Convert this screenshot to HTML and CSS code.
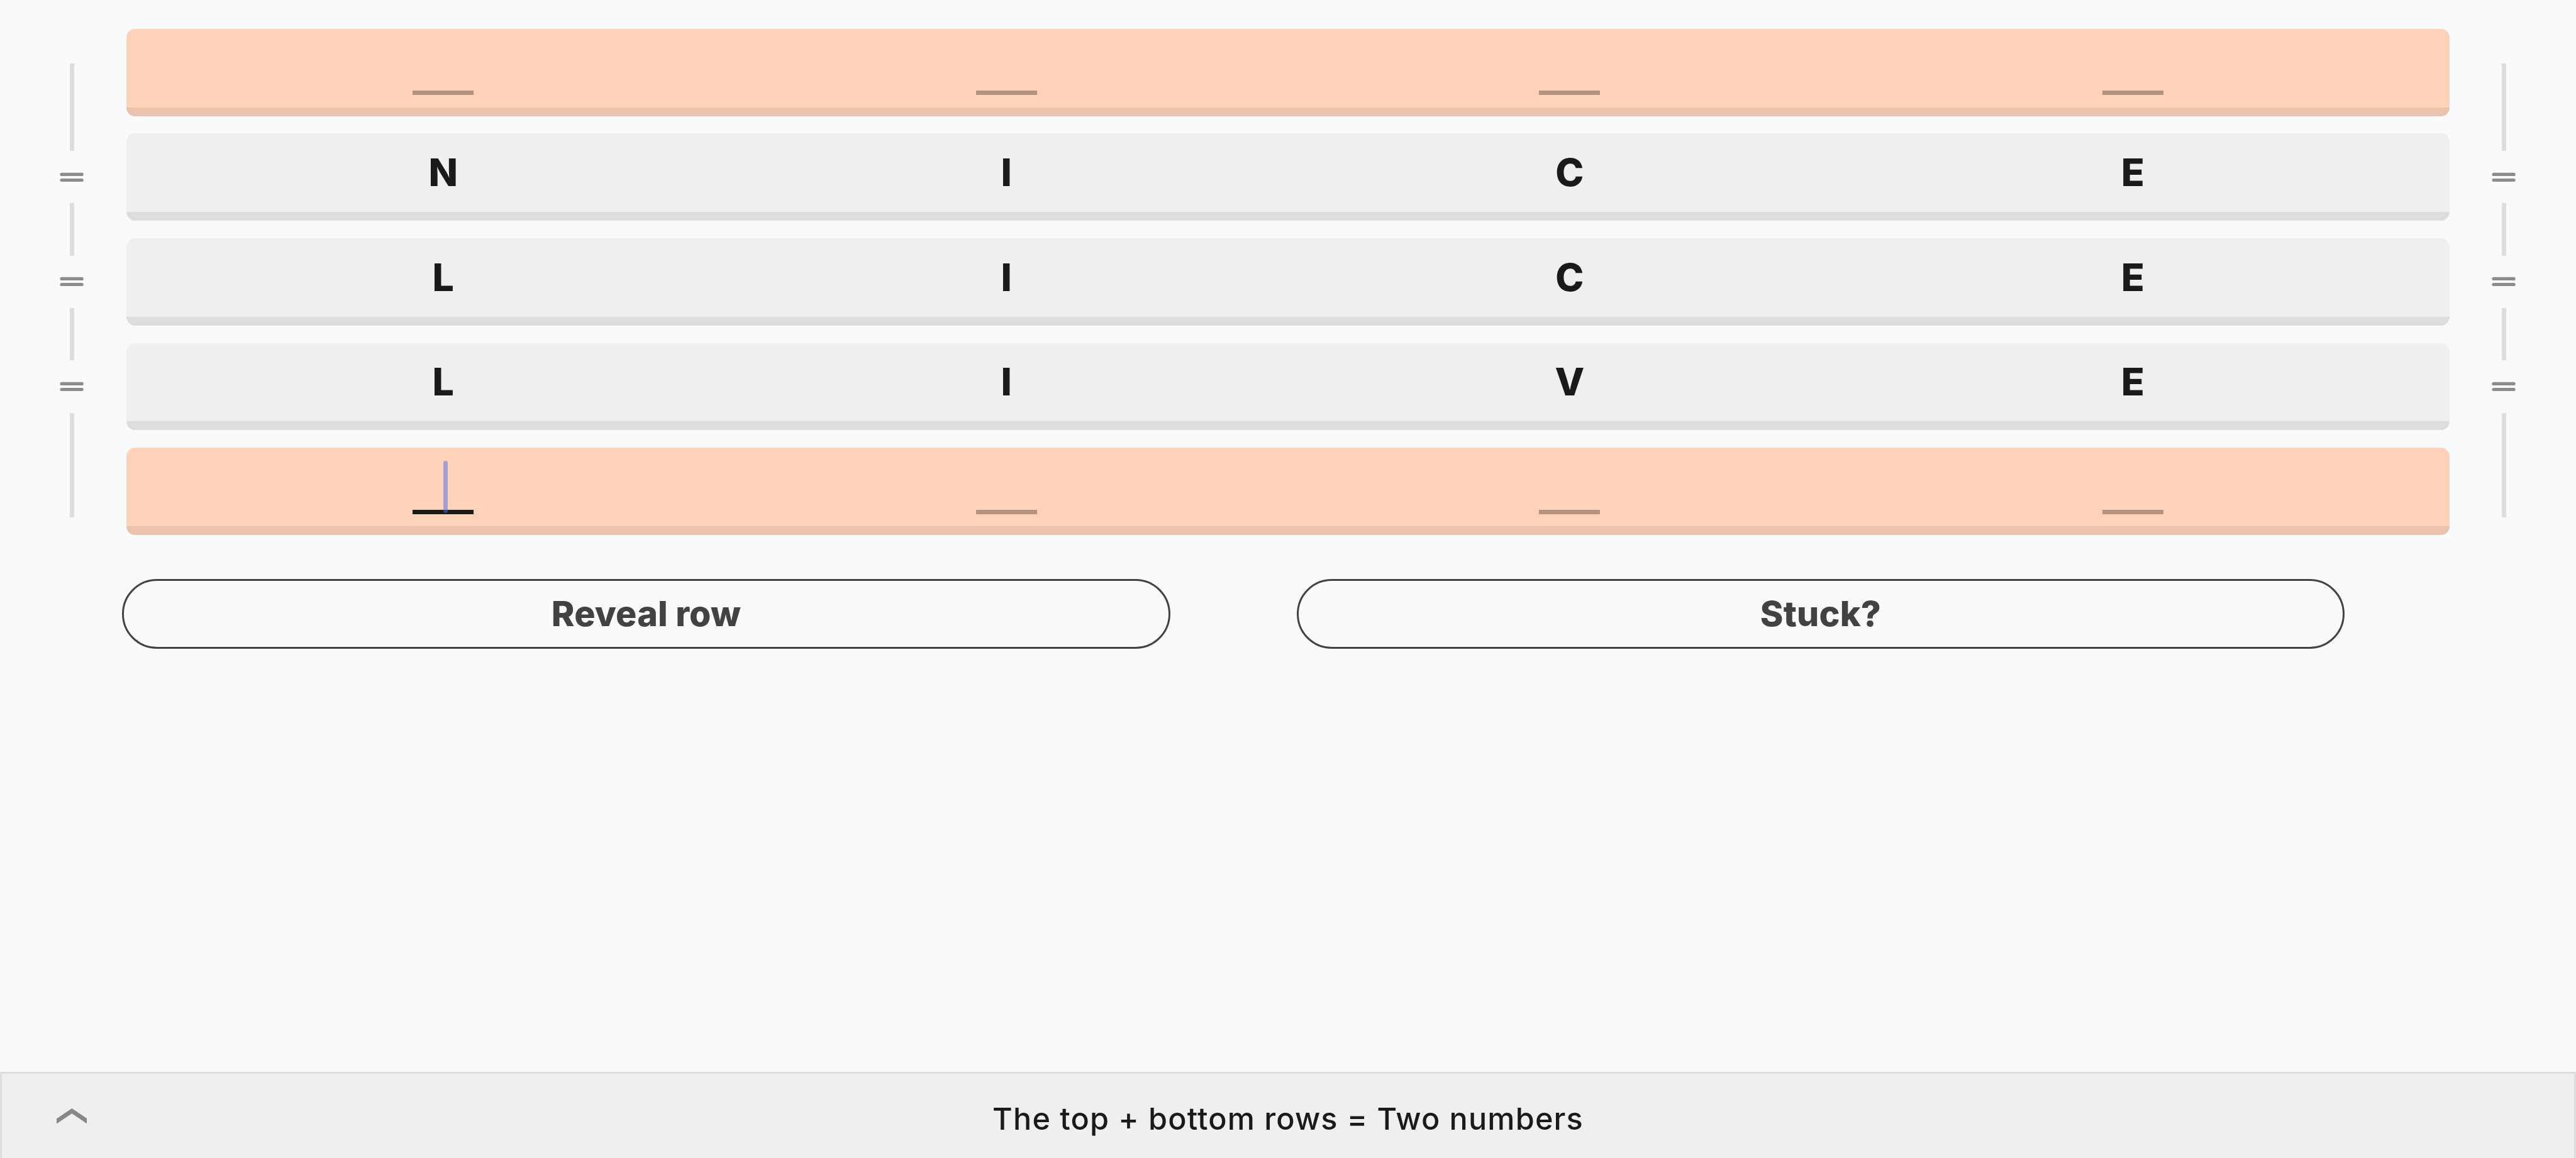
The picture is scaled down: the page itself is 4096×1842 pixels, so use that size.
FILE: index.html
```html
<!DOCTYPE html>
<html lang="en">
<head>
  <meta charset="UTF-8" />
  <meta name="viewport" content="width=device-width, initial-scale=1.0" />
  <title>Word ladder</title>
  <link rel="stylesheet" href="styles.css">
</head>
<body>
  <main class="game">
    <div class="board">
      <div class="rail rail-left">
        <span class="line first"></span>
        <svg class="equals" viewBox="0 0 44 18"><path d="M3.5 4H40.5M3.5 14.4H40.5" /></svg>
        <span class="line"></span>
        <svg class="equals" viewBox="0 0 44 18"><path d="M3.5 4H40.5M3.5 14.4H40.5" /></svg>
        <span class="line"></span>
        <svg class="equals" viewBox="0 0 44 18"><path d="M3.5 4H40.5M3.5 14.4H40.5" /></svg>
        <span class="line last"></span>
      </div>

      <div class="rows">
        <div class="row end">
          <span class="slot"></span><span class="slot"></span><span class="slot"></span><span class="slot"></span>
        </div>
        <div class="row"><span>N</span><span>I</span><span>C</span><span>E</span></div>
        <div class="row"><span>L</span><span>I</span><span>C</span><span>E</span></div>
        <div class="row"><span>L</span><span>I</span><span>V</span><span>E</span></div>
        <div class="row end">
          <span class="slot active"><i class="caret"></i></span><span class="slot"></span><span class="slot"></span><span class="slot"></span>
        </div>
      </div>

      <div class="rail rail-right">
        <span class="line first"></span>
        <svg class="equals" viewBox="0 0 44 18"><path d="M3.5 4H40.5M3.5 14.4H40.5" /></svg>
        <span class="line"></span>
        <svg class="equals" viewBox="0 0 44 18"><path d="M3.5 4H40.5M3.5 14.4H40.5" /></svg>
        <span class="line"></span>
        <svg class="equals" viewBox="0 0 44 18"><path d="M3.5 4H40.5M3.5 14.4H40.5" /></svg>
        <span class="line last"></span>
      </div>
    </div>

    <div class="buttons">
      <button type="button">Reveal row</button>
      <button type="button">Stuck?</button>
    </div>
  </main>

  <footer class="hint">
    <svg class="chevron" viewBox="0 0 56 28.4"><path d="M0 19L28 0L56 19V28.4L28 9.4L0 28.4Z" /></svg>
    <p>The top + bottom rows = Two numbers</p>
  </footer>
</body>
</html>
```

FILE: styles.css
```css
* { box-sizing: border-box; }

html { font-size: 13.8848px; }

body {
  margin: 0;
  height: 100vh;
  display: flex;
  flex-direction: column;
  overflow: hidden;
  background: #f9fafc;
  color: #1a1a1a;
  font-family: Inter, sans-serif;
}

.game { flex: 1; padding-top: 3.3rem; }

.board {
  display: grid;
  grid-template-columns: 14.5rem 1fr 14.5rem;
}

/* side rails */
.rail {
  display: flex;
  flex-direction: column;
  align-items: center;
  padding-top: 4rem;
}
.rail-left { padding-left: 2rem; }
.rail-right { padding-right: 2rem; }

.line { width: 0.5rem; height: 6rem; background: #dcddde; }
.line.first { height: 10rem; }
.line.last { height: 12rem; }

.equals {
  width: 2.75rem;
  height: 1.125rem;
  margin: 2.4rem 0 2.475rem;
  fill: none;
  stroke: #8b8c8b;
  stroke-width: 6;
  stroke-linecap: round;
}

/* rows */
.rows { display: flex; flex-direction: column; gap: 2rem; }

.row {
  display: grid;
  grid-template-columns: repeat(4, 1fr);
  justify-items: center;
  align-items: center;
  height: 10rem;
  padding: 0 4rem;
  border-radius: 1rem;
  background: linear-gradient(to top, #dcdddd 1rem, #efefef 1rem);
  font-size: 4.375rem;
  font-weight: 800;
  line-height: 1;
}
.row span { padding-bottom: 1.05rem; }
.row.end { background: linear-gradient(to top, #ebc2ac 1rem, #ffd2b9 1rem); }

.row .slot {
  position: relative;
  align-self: end;
  width: 7rem;
  height: 0.5rem;
  margin-bottom: 2.4rem;
  padding: 0;
  background: #b29281;
}
.row .slot.active { background: #1a1a17; }

.caret {
  position: absolute;
  left: 50%;
  bottom: 0.125rem;
  width: 0.5rem;
  height: 6rem;
  border-radius: 0.25rem;
  background: rgba(73, 110, 243, 0.5);
}

.buttons { display: flex; gap: 14.5rem; padding: 5rem 0 0 14rem; }

button {
  width: 120rem;
  height: 8rem;
  padding: 0 0 0.1rem;
  border: 0.25rem solid #424242;
  border-radius: 4rem;
  background: none;
  color: #424242;
  font-family: inherit;
  font-size: 4rem;
  font-weight: 800;
  letter-spacing: 0.003em;
}

.hint {
  display: flex;
  align-items: center;
  justify-content: center;
  height: 9.875rem;
  border: 0.25rem solid #dddee0;
  border-bottom: 0;
  background: #eeeff1;
  font-size: 3.5rem;
  font-weight: 550;
}
.hint p { flex: 1; margin: 0 10rem 0 0; padding-top: 0.6rem; text-align: center; letter-spacing: 0.024em; }

.chevron { width: 3.5rem; height: 1.775rem; margin: 0 0.25rem 0 6.25rem; fill: #868788; }
```
